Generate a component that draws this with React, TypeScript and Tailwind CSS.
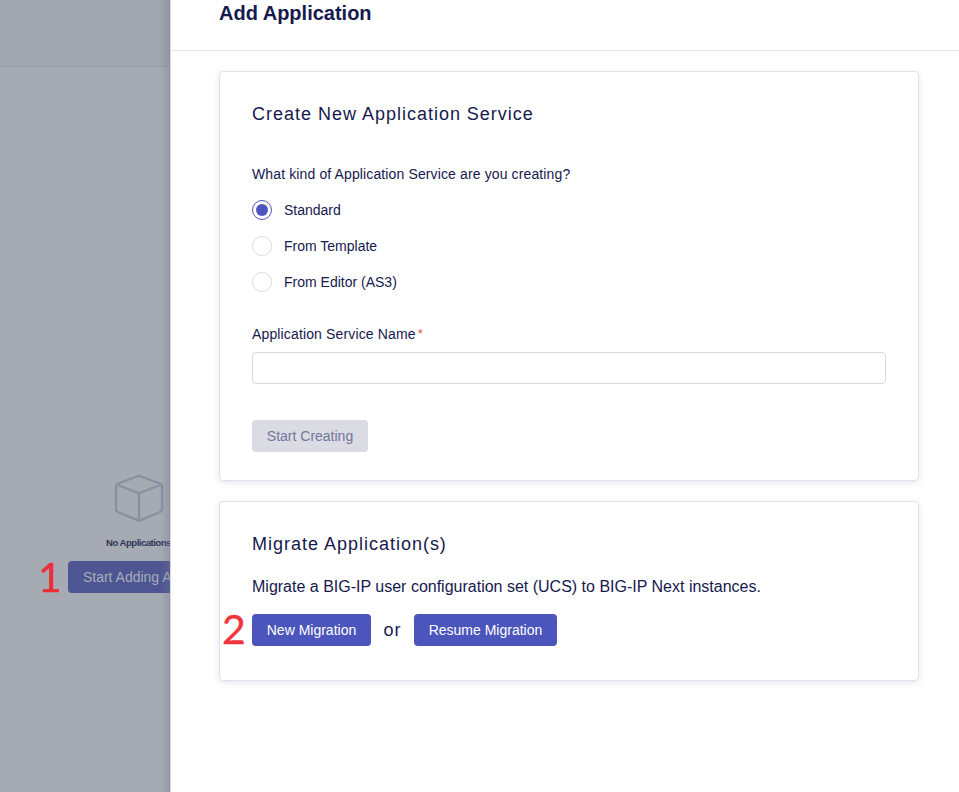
import React, { useState } from "react";

const KINDS = ["Standard", "From Template", "From Editor (AS3)"];

function Card({ className, children }: { className: string; children: React.ReactNode }) {
  return (
    <section
      className={`box-border w-[700px] rounded border border-[#e1e1ea] bg-white px-8 shadow-[0_2px_6px_rgba(60,60,110,0.12)] ${className}`}
    >
      {children}
    </section>
  );
}

function CardTitle({ children }: { children: React.ReactNode }) {
  return <h2 className="text-[18px] leading-6 tracking-[0.99px]">{children}</h2>;
}

function PrimaryButton({ className, children }: { className: string; children: React.ReactNode }) {
  return (
    <button className={`h-8 whitespace-nowrap rounded bg-[#4b55bc] text-center text-[14px] leading-8 text-white ${className}`}>
      {children}
    </button>
  );
}

function BoxIcon() {
  return (
    <svg
      className="ml-[114px] mt-[407px] h-[50px] w-[50px] shrink-0"
      viewBox="0 0 50 50"
      fill="none"
      stroke="#8b8fa0"
      strokeWidth="2.3"
      strokeLinejoin="round"
    >
      <path d="M22.8 2.5Q25 1.7 27.2 2.5L45.5 9.4Q48 10.4 48 13V35Q48 37.3 45.5 38.3L27.2 45.9Q25 46.8 22.8 45.9L4.5 38.3Q2 37.3 2 35V13Q2 10.4 4.5 9.4Z" />
      <path d="M3 10.8L25 19.2L47 10.8M25 19.2V46.5" />
    </svg>
  );
}

export default function App() {
  const [kind, setKind] = useState(0);
  return (
    <div className="relative flex h-[792px] w-[959px] overflow-hidden bg-white font-['Liberation_Sans',Arial,sans-serif] text-[#16194d]">
      <aside className="relative flex w-[170px] shrink-0 flex-col bg-[#a6abb3]">
        <div className="h-[67px] shrink-0 border-b border-[#979dac] bg-[#a1a5ae]" />
        <BoxIcon />
        <p className="ml-[106px] mt-[12px] whitespace-nowrap text-[9.6px] font-bold leading-[14px] tracking-[-0.52px] text-[#30365a]">
          No Applications
        </p>
        <button className="ml-[68px] mt-[11px] h-8 w-[102px] shrink-0 whitespace-nowrap rounded-l bg-[#4d5592] pl-[15px] text-left text-[14px] leading-8 tracking-[-0.02px] text-[#a9adb8]">
          Start Adding A
        </button>
        <div className="absolute inset-y-0 right-0 w-[10px] bg-linear-to-r from-transparent to-[#70758f]/35" />
      </aside>

      <main className="relative flex min-w-0 flex-1 flex-col border-l border-[#d5d7e0] bg-white">
        <header className="h-[51px] shrink-0 border-b border-[#e6e6ef] pl-12">
          <h1 className="text-[20px] font-bold leading-[26px]">Add Application</h1>
        </header>
        <div className="flex flex-col gap-5 pl-12 pt-5">
          <Card className="h-[410px] pt-[30px]">
            <CardTitle>Create New Application Service</CardTitle>
            <p className="mt-[38px] text-[14px] leading-5 tracking-[0.125px]">What kind of Application Service are you creating?</p>
            <div className="mt-4 flex flex-col gap-4">
              {KINDS.map((label, i) => (
                <label key={label} className="flex h-5 items-center gap-3 text-[14px] leading-5">
                  <input type="radio" name="kind" className="sr-only" checked={kind === i} onChange={() => setKind(i)} />
                  <span
                    className={`flex h-5 w-5 items-center justify-center rounded-full border ${
                      kind === i ? "border-[#4b55bc]" : "border-[#dcdce6]"
                    }`}
                  >
                    {kind === i && <span className="h-3 w-3 rounded-full bg-[#4b55bc]" />}
                  </span>
                  {label}
                </label>
              ))}
            </div>
            <label htmlFor="service-name" className="mt-8 flex text-[14px] leading-5 tracking-[0.14px]">
              Application Service Name
              <span className="ml-0.5 text-[13px] text-[#e0533d]">*</span>
            </label>
            <input id="service-name" className="mt-2 block h-8 w-[634px] rounded border border-[#d8d8e2] bg-white outline-none" />
            <button className="mt-9 h-8 w-[116px] rounded bg-[#dbdbe4] text-center text-[14px] leading-8 text-[#74769a]">
              Start Creating
            </button>
          </Card>

          <Card className="h-[180px] pt-[30px]">
            <CardTitle>Migrate Application(s)</CardTitle>
            <p className="mt-[19px] text-[16px] leading-6">
              Migrate a BIG-IP user configuration set (UCS) to BIG-IP Next instances.
            </p>
            <div className="mt-[15px] flex items-center">
              <PrimaryButton className="w-[119px]">New Migration</PrimaryButton>
              <span className="w-[43px] text-center text-[18px] leading-8 tracking-[1px]">or</span>
              <PrimaryButton className="w-[143px]">Resume Migration</PrimaryButton>
            </div>
          </Card>
        </div>
      </main>

      <span className="absolute left-[38px] top-[556px] font-['Lato',sans-serif] text-[41px] leading-[42px] text-[#e92e38] [-webkit-text-stroke:0.4px_#e92e38]">1</span>
      <span className="absolute left-[222px] top-[608px] font-['Lato',sans-serif] text-[41px] leading-[42px] text-[#f0353c] [-webkit-text-stroke:0.4px_#f0353c]">2</span>
    </div>
  );
}
